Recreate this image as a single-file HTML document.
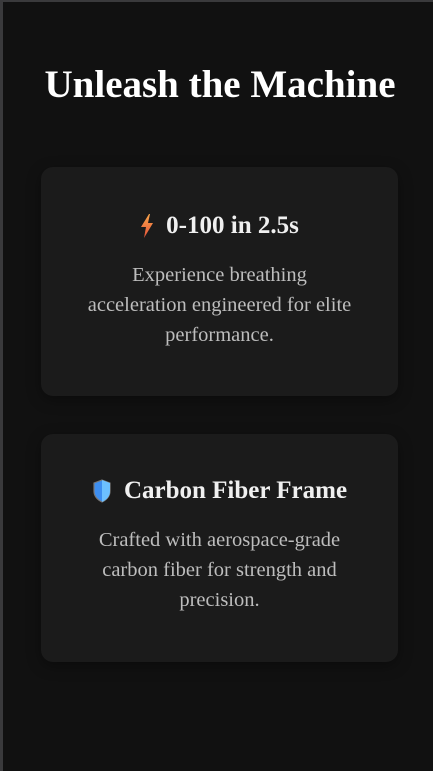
<!DOCTYPE html>
<html><head><style>
html,body{margin:0;padding:0;}
body{width:433px;height:771px;background:#111;position:relative;overflow:hidden;font-family:"Liberation Serif",serif;}
.bt{position:absolute;left:0;top:0;width:433px;height:2px;background:#3a3a3c;}
.bl{position:absolute;left:0;top:0;width:3px;height:771px;background:#3a3a3c;}
h1{position:absolute;top:60px;left:0;width:440px;text-align:center;margin:0;color:#fff;font-size:39px;font-weight:bold;line-height:50px;}
.card{position:absolute;left:41px;width:357px;background:#1b1b1b;border-radius:12px;box-shadow:0 4px 14px rgba(0,0,0,.35);text-align:center;}
.h{display:flex;justify-content:center;align-items:center;gap:12px;color:#f0f0f0;font-weight:bold;font-size:25px;}
.p{color:#bdbdbd;font-size:20.5px;line-height:30px;margin-top:19px;white-space:nowrap;}
</style></head><body>
<div class="bt"></div><div class="bl"></div>
<h1>Unleash the Machine</h1>
<div class="card" style="top:167px;height:229px;">
 <div class="h" style="margin-top:44px;height:30px;">
  <svg width="14" height="24" viewBox="0 0 14 24"><defs><linearGradient id="g" x1="0" y1="0" x2="0" y2="1"><stop offset="0" stop-color="#f9a64a"/><stop offset="1" stop-color="#e5523a"/></linearGradient></defs><path d="M9 0 L1 13 L6 13 L4 24 L13 9 L8 9 L10 0Z" fill="url(#g)"/></svg>
  <span>0-100 in 2.5s</span></div>
 <div class="p">Experience breathing<br>acceleration engineered for elite<br>performance.</div>
</div>
<div class="card" style="top:434px;height:228px;">
 <div class="h" style="margin-top:42px;height:30px;">
  <svg width="20" height="24" viewBox="0 0 20 24"><path d="M10 1 L18 4 L18 12 C18 18 14 21 10 23 C6 21 2 18 2 12 L2 4Z" fill="#3d8ef0" stroke="#777" stroke-width="1.2"/><path d="M10 1 L18 4 L18 12 C18 18 14 21 10 23Z" fill="#6cc0ff"/></svg>
  <span>Carbon Fiber Frame</span></div>
 <div class="p">Crafted with aerospace-grade<br>carbon fiber for strength and<br>precision.</div>
</div>
</body></html>
